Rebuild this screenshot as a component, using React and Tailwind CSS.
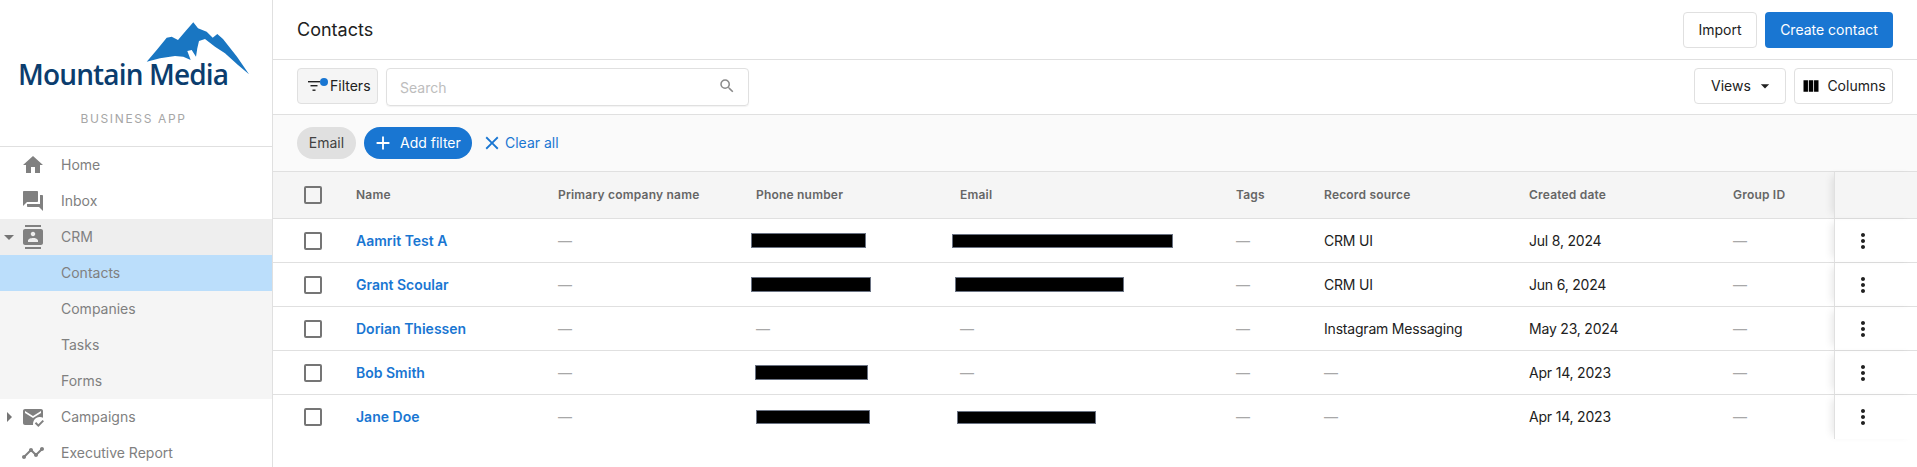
import React from "react";
import {
  MdHome,
  MdQuestionAnswer,
  MdContacts,
  MdMarkEmailRead,
  MdTimeline,
  MdMoreVert,
  MdViewColumn,
  MdSearch,
  MdArrowDropDown,
  MdArrowRight,
  MdAdd,
  MdClose,
} from "react-icons/md";

const columns = "grid-cols-[83px_202px_198px_204px_276px_88px_205px_204px_101px_83px]";

const headers = [
  "Name",
  "Primary company name",
  "Phone number",
  "Email",
  "Tags",
  "Record source",
  "Created date",
  "Group ID",
];

function Redacted({ className }) {
  return <span className={"block bg-black border border-gray-500 " + className} />;
}

const Dash = () => <span className="text-[#a8a8a8]">—</span>;

const rows = [
  {
    name: "Aamrit Test A",
    phone: <Redacted className="w-[115px] h-[15px] -ml-[5px]" />,
    email: <Redacted className="w-[221px] h-[14px] -ml-[8px]" />,
    source: "CRM UI",
    date: "Jul 8, 2024",
  },
  {
    name: "Grant Scoular",
    phone: <Redacted className="w-[120px] h-[15px] -ml-[5px]" />,
    email: <Redacted className="w-[169px] h-[15px] -ml-[5px]" />,
    source: "CRM UI",
    date: "Jun 6, 2024",
  },
  {
    name: "Dorian Thiessen",
    phone: <Dash />,
    email: <Dash />,
    source: "Instagram Messaging",
    date: "May 23, 2024",
  },
  {
    name: "Bob Smith",
    phone: <Redacted className="w-[113px] h-[15px] -ml-[1px]" />,
    email: <Dash />,
    source: <Dash />,
    date: "Apr 14, 2023",
  },
  {
    name: "Jane Doe",
    phone: <Redacted className="w-[114px] h-[14px]" />,
    email: <Redacted className="w-[139px] h-[13px] -ml-[3px]" />,
    source: <Dash />,
    date: "Apr 14, 2023",
  },
];

const nav = [
  { label: "Home", icon: MdHome },
  { label: "Inbox", icon: MdQuestionAnswer },
  { label: "CRM", icon: MdContacts, caret: "down", bg: "bg-[#eeeeee]" },
  { label: "Contacts", bg: "bg-[#bbdefb]" },
  { label: "Companies", bg: "bg-[#f5f5f5]" },
  { label: "Tasks", bg: "bg-[#f5f5f5]" },
  { label: "Forms", bg: "bg-[#f5f5f5]" },
  { label: "Campaigns", icon: MdMarkEmailRead, caret: "right" },
  { label: "Executive Report", icon: MdTimeline },
];

function Checkbox() {
  return <span className="block w-[18px] h-[18px] border-2 border-[#757575] rounded-[2px]" />;
}

function Logo() {
  return (
    <div className="relative h-[147px] border-b border-[#e0e0e0] shrink-0">
      <svg className="absolute left-[140px] top-[15px]" width="115" height="65" viewBox="0 0 115 65">
        <path
          fill="#1976c2"
          d="M6.7 46.7 L16.7 35 L26.7 22.7 L31.7 21.7 L38 25 L45 16.7 L53.3 7.3 L58 13.3 L66.7 16.7 L72.7 22.7 L77.3 19 L83 24 L97 41.7 L109 59.3 L98 50 L85 38.3 L75 31.7 L65 24 L59 26 L57.3 33.3 L56 41.7 L51.7 35 L47.3 36 L50.7 45 L43.3 41.7 L35 41 L20 43.3 Z"
        />
      </svg>
      <div className="absolute left-[18px] top-[57px] text-[28px] leading-[34px] font-semibold tracking-[-0.85px] text-[#0b3d6e] whitespace-nowrap font-['Open_Sans',sans-serif]">
        Mountain Media
      </div>
      <div className="absolute left-0 right-[5px] top-[111px] text-center text-[12px] leading-[16px] tracking-[1.65px] text-[#a6a6a6]">
        BUSINESS APP
      </div>
    </div>
  );
}

function Sidebar() {
  return (
    <aside className="w-[273px] shrink-0 border-r border-[#e0e0e0] h-[467px] overflow-hidden">
      <Logo />
      <nav>
        {nav.map((item) => (
          <div key={item.label} className={"flex items-center h-9 text-sm text-[#808080] " + (item.bg || "")}>
            <span className="w-[21px] flex justify-center shrink-0">
              {item.caret === "down" && <MdArrowDropDown className="w-6 h-6 text-[#757575] shrink-0 ml-[-3px]" />}
              {item.caret === "right" && <MdArrowRight className="w-6 h-6 text-[#757575] shrink-0 ml-[-3px]" />}
            </span>
            <span className="w-[40px] shrink-0">
              {item.icon && <item.icon className="w-6 h-6 text-[#808080]" />}
            </span>
            {item.label}
          </div>
        ))}
      </nav>
    </aside>
  );
}

function FilterGlyph() {
  return (
    <span className="relative block w-[22px] h-[14px] shrink-0">
      <svg className="absolute left-0 top-[1px]" width="14" height="12" viewBox="0 0 14 12" fill="#212121">
        <rect x="0" y="1" width="12" height="1.4" />
        <rect x="2.5" y="5" width="7" height="1.4" />
        <rect x="4.5" y="9.5" width="3" height="1.4" />
      </svg>
      <span className="absolute left-[12px] top-[-1px] w-2 h-2 rounded-full bg-[#1976d2]" />
    </span>
  );
}

function Header() {
  return (
    <header className="flex items-center justify-between h-[60px] px-6 border-b border-[#e0e0e0]">
      <h1 className="text-lg text-[#212121]">Contacts</h1>
      <div className="flex gap-2">
        <button className="h-9 w-[74px] text-sm text-[#212121] bg-white border border-[#e0e0e0] rounded">Import</button>
        <button className="h-9 w-[128px] text-sm text-white bg-[#1976d2] rounded">Create contact</button>
      </div>
    </header>
  );
}

function Toolbar() {
  return (
    <div className="flex items-start h-[55px] pt-2 px-6 border-b border-[#e0e0e0]">
      <button className="flex items-center h-9 w-[81px] pl-[10px] text-sm text-[#212121] bg-[#f5f5f5] border border-[#e0e0e0] rounded">
        <FilterGlyph />
        Filters
      </button>
      <div className="flex items-center justify-between w-[363px] h-[38px] ml-2 pl-[13px] pr-[12px] border border-[#e0e0e0] rounded shadow-[0_1px_1px_rgba(0,0,0,0.05)]">
        <span className="text-sm text-[#bdbdbd] pt-[1px]">Search</span>
        <MdSearch className="w-[18px] h-[18px] text-[#8a8a8a] -mt-[2px]" />
      </div>
      <div className="flex gap-2 ml-auto">
        <button className="flex items-center h-9 w-[92px] pl-[16px] text-sm text-[#212121] border border-[#e0e0e0] rounded">
          Views
          <MdArrowDropDown className="w-5 h-5 ml-[4px]" />
        </button>
        <button className="flex items-center justify-center h-9 w-[99px] gap-[6px] text-sm text-[#212121] border border-[#e0e0e0] rounded">
          <MdViewColumn className="w-5 h-5 text-black" />
          Columns
        </button>
      </div>
    </div>
  );
}

function FilterRow() {
  return (
    <div className="flex items-center h-[57px] pl-6 border-b border-[#e0e0e0] bg-[#fafafa]">
      <span className="flex items-center justify-center h-8 w-[59px] rounded-full bg-[#e0e0e0] text-sm text-[#424242]">Email</span>
      <button className="flex items-center h-8 w-[108px] ml-2 pl-[8px] gap-[6px] rounded-full bg-[#1976d2] text-sm text-white">
        <MdAdd className="w-[22px] h-[22px]" />
        Add filter
      </button>
      <button className="flex items-center ml-[10px] gap-[2px] text-sm text-[#1976d2]">
        <MdClose className="w-[22px] h-[22px] -ml-[1px]" />
        Clear all
      </button>
    </div>
  );
}

function Table() {
  return (
    <div className="relative">
      <div className={"grid items-center h-[47px] bg-[#f5f5f5] border-b border-[#e0e0e0] text-xs font-semibold tracking-[0.2px] text-[#666666] " + columns}>
        <span className="pl-[31px]">
          <Checkbox />
        </span>
        {headers.map((h) => (
          <span key={h}>{h}</span>
        ))}
        <span className="self-stretch border-l border-[#e0e0e0] shadow-[-6px_0_8px_-4px_rgba(0,0,0,0.1)]" />
      </div>
      {rows.map((row, i) => (
        <div
          key={row.name}
          className={"grid items-center h-[44px] text-sm tracking-[-0.2px] text-[#212121] " + columns + (i < rows.length - 1 ? " border-b border-[#e0e0e0]" : "")}
        >
          <span className="pl-[31px]">
            <Checkbox />
          </span>
          <span className="font-semibold tracking-normal text-[#1976d2]">{row.name}</span>
          <Dash />
          <span>{row.phone}</span>
          <span>{row.email}</span>
          <Dash />
          <span>{row.source}</span>
          <span>{row.date}</span>
          <Dash />
          <span className="self-stretch flex items-center pl-[16px] border-l border-[#e0e0e0] shadow-[-6px_0_8px_-4px_rgba(0,0,0,0.1)]">
            <MdMoreVert className="w-6 h-6 text-[#212121]" />
          </span>
        </div>
      ))}
    </div>
  );
}

export default function App() {
  return (
    <div className="flex w-[1917px] h-[467px] overflow-hidden bg-white font-['Inter',sans-serif]">
      <Sidebar />
      <main className="flex-1 min-w-0">
        <Header />
        <Toolbar />
        <FilterRow />
        <Table />
      </main>
    </div>
  );
}
